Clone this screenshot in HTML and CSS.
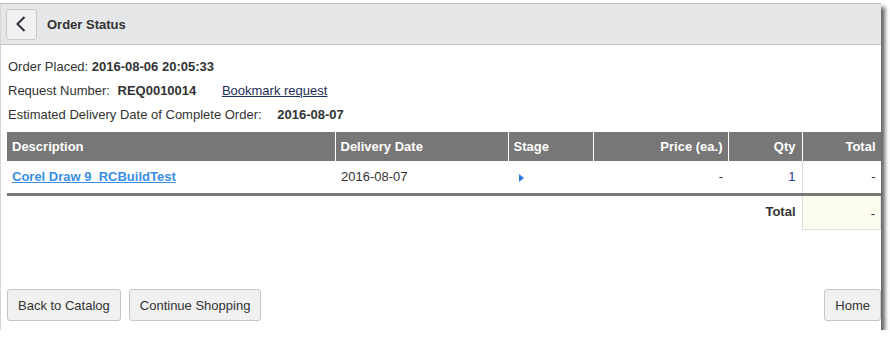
FILE: index.html
```html
<!DOCTYPE html>
<html lang="en">
<head>
<meta charset="UTF-8">
<title>Order Status</title>
<link rel="stylesheet" href="styles.css">
</head>
<body>
	<div class="window">
		<div class="topbar">
			<span class="backbtn">
				<svg width="10" height="16" viewBox="0 0 10 16"><polyline points="8.5,1 1.5,8 8.5,15" fill="none" stroke="#2b2f3e" stroke-width="2"/></svg>
			</span>
			<h3 class="title">Order Status</h3>
		</div>
		<div class="content">
			<div class="info">
				<p>Order Placed: <b>2016-08-06 20:05:33</b></p>
				<p>Request Number: <b class="val">REQ0010014</b> <a href="#" class="bookmark">Bookmark request</a></p>
				<p>Estimated Delivery Date of Complete Order: <b class="val2">2016-08-07</b></p>
			</div>
			<table class="items">
				<thead>
					<tr>
						<th class="c-desc">Description</th>
						<th class="c-date">Delivery Date</th>
						<th class="c-stage">Stage</th>
						<th class="c-price num">Price (ea.)</th>
						<th class="c-qty num">Qty</th>
						<th class="c-total num">Total</th>
					</tr>
				</thead>
				<tbody>
					<tr class="row">
						<td><a href="#" class="itemlink">Corel Draw 9_RCBuildTest</a></td>
						<td class="date">2016-08-07</td>
						<td><span class="stagearrow"></span></td>
						<td class="num">-</td>
						<td class="num qty">1</td>
						<td class="num totalcell">-</td>
					</tr>
					<tr class="sumrow">
						<td colspan="5" class="sumlabel">Total</td>
						<td class="num sumval">-</td>
					</tr>
				</tbody>
			</table>
			<div class="actions">
				<button class="btn">Back to Catalog</button>
				<button class="btn">Continue Shopping</button>
				<button class="btn home">Home</button>
			</div>
		</div>
	</div>
</body>
</html>
```

FILE: styles.css
```css
*{margin: 0;padding: 0;box-sizing: border-box;}
body{
	background: #fff;
	font: 13px "Liberation Sans", Arial, sans-serif;
	color: #333;
}
.window{
	width: 881px;
	height: 327px;
	margin-top: 3px;
	border-left: 1px solid #d6d6d6;
	border-top: 1px solid #b8bcc0;
	background: #fff;
	box-shadow: 4px 4px 4px rgba(0,0,0,.6);
	display: flex;
	flex-direction: column;
}
.topbar{
	height: 41px;
	background: #e6e7e9;
	border-bottom: 1px solid #c2c6ca;
	display: flex;
	align-items: center;
	padding-left: 5px;
}
.backbtn{
	width: 31px;
	height: 31px;
	border: 1px solid #c9c9c9;
	border-radius: 3px;
	background: #f1f1f2;
	display: flex;
	align-items: center;
	justify-content: center;
	padding-right: 2px;
}
.title{
	font-size: 13px;
	font-weight: bold;
	color: #333;
	margin-left: 10px;
}
.content{
	flex: 1;
	display: flex;
	flex-direction: column;
	padding: 10px 0 9px 6px;
}
.info p{
	line-height: 24px;
	padding-left: 1px;
}
.info .val{margin-left: 4px;margin-right: 22px;}
.info .val2{margin-left: 12px;}
.bookmark{color: #1d2f5a;}
.items{
	margin-top: 5px;
	width: 874px;
	border-collapse: collapse;
}
.items th{
	background: #777;
	color: #fff;
	font-weight: bold;
	text-align: left;
	height: 29px;
	padding: 0 5px;
	border-left: 1px solid #fff;
}
.items th:first-child{border-left: none;}
.items .num{text-align: right;}
.c-desc{width: 328px;}
.c-date{width: 173px;}
.c-stage{width: 85px;}
.c-price{width: 135px;}
.c-qty{width: 74px;}
.items th.c-qty{padding-right: 6px;}
.items td{
	height: 33px;
	padding: 0 5px;
	vertical-align: middle;
}
.items td.date{padding-left: 6px;}
.items .row td{border-bottom: 3px solid #777;}
.items td.qty{color: #1f3a93;padding-right: 6px;}
.itemlink{color: #3a8ee6;font-weight: bold;}
.items td.totalcell{border-left: 1px solid #ddd;}
.stagearrow{
	display: inline-block;
	margin: 6px 0 0 6px;
	border-left: 5px solid #2a7be0;
	border-top: 4px solid transparent;
	border-bottom: 4px solid transparent;
}
.sumrow td{height: 35px;}
.sumlabel{
	font-weight: bold;
	vertical-align: top !important;
	padding-top: 8px !important;
	padding-right: 6px !important;
	text-align: right;
}
.sumval{
	background: #fdfdf0;
	border-left: 1px solid #ddd;
	border-right: 1px solid #e6e6e6;
	border-bottom: 1px solid #ddd;
	vertical-align: bottom !important;
	padding-bottom: 8px !important;
}
.actions{
	margin-top: auto;
	display: flex;
	gap: 8px;
}
.btn{
	height: 32px;
	padding: 0 10px;
	font: 13px "Liberation Sans", Arial, sans-serif;
	color: #333;
	background: #f1f1f1;
	border: 1px solid #c6c6c6;
	border-radius: 3px;
}
.btn.home{margin-left: auto;}
```
